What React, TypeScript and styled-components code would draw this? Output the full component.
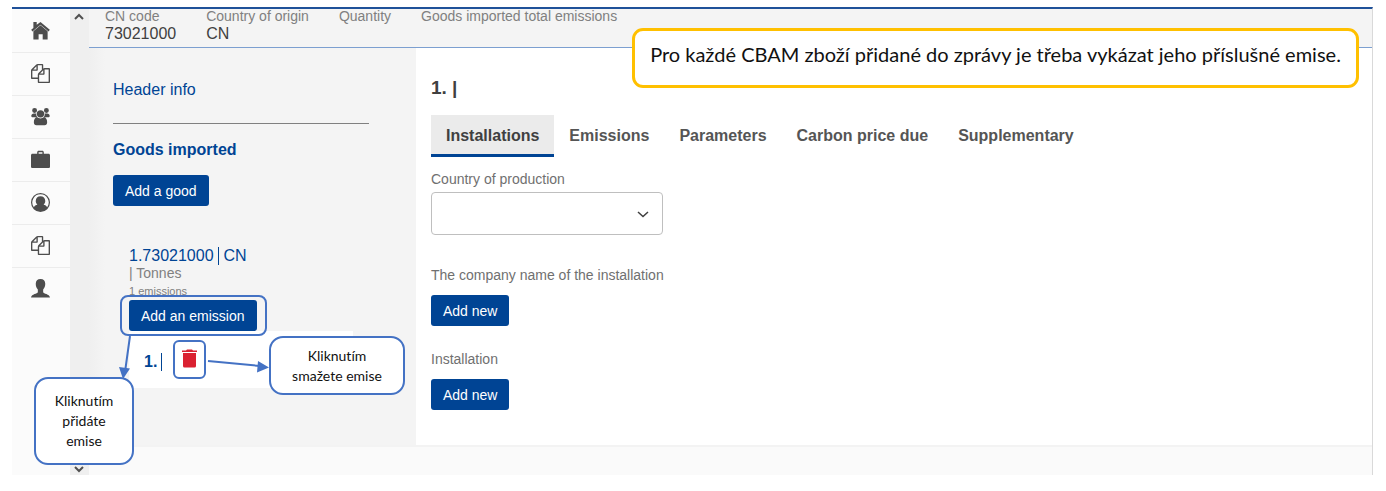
import React from 'react';
import styled, { createGlobalStyle, css } from 'styled-components';

const BLUE = '#004494';
const NOTE_BLUE = '#4472c4';

const GlobalStyle = createGlobalStyle`
  *, *::before, *::after { box-sizing: border-box; }
  body {
    margin: 0;
    background: #fff;
    color: #404040;
    font: 14px/16px "Liberation Sans", Arial, sans-serif;
  }
`;

const Page = styled.div`
  padding: 7px 13px 16px 12px;
`;

const Frame = styled.div`
  position: relative;
  display: grid;
  grid-template-columns: 58px 19px 1fr;
  border-top: 2px solid #1f5199;
  border-right: 1px solid #d9d9d9;
`;

const IconRail = styled.nav`
  display: flex;
  flex-direction: column;
  padding-top: 1px;
  background: #fbfbfb;
`;

const RailLink = styled.a`
  display: flex;
  align-items: center;
  justify-content: center;
  height: 43px;
  padding: 0 2px 2px 0;
  color: #4d4d4d;
  border-bottom: 1px solid #ececec;
  &:last-child { border-bottom: 0; }
`;

const ScrollRail = styled.div`
  display: flex;
  flex-direction: column;
  justify-content: space-between;
  align-items: center;
  padding: 4px 2px 2px 0;
  background: #efefef;
  color: #505050;
`;

const ScrollButton = styled.button`
  display: flex;
  padding: 0;
  border: 0;
  background: none;
  color: inherit;
`;

const Main = styled.main`
  min-width: 0;
  display: flex;
  flex-direction: column;
`;

const Summary = styled.dl`
  display: flex;
  gap: 30px;
  margin: 0;
  height: 39px;
  padding: 0 16px;
  background: #f4f4f4;
  border-bottom: 1px solid #7c9fd0;
`;

const SummaryItem = styled.div`
  dt { color: #808080; line-height: 14px; }
  dd { margin: 0; font-size: 16px; line-height: 22px; }
`;

const Columns = styled.div`
  display: grid;
  grid-template-columns: 327px 1fr;
`;

const SidePane = styled.aside`
  padding: 33px 24px 57px;
  background: linear-gradient(to right, #efefef, #f4f4f4 16px);
`;

const SideLink = styled.a<{ $strong?: boolean }>`
  display: block;
  color: ${BLUE};
  font-size: 16px;
  line-height: 18px;
  font-weight: ${p => (p.$strong ? 700 : 400)};
  text-decoration: none;
`;

const Divider = styled.hr`
  width: 256px;
  margin: 24px 0 17px;
  border: 0;
  border-top: 1px solid #808080;
`;

const Button = styled.button`
  display: block;
  height: 31px;
  padding: 0 12px;
  border: 0;
  border-radius: 3px;
  background: ${BLUE};
  color: #fff;
  font: inherit;
`;

const GoodsButton = styled(Button)`
  margin-top: 16px;
`;

const Good = styled.section`
  margin: 41px 0 0 16px;
  color: #808080;
`;

const Pipe = styled.span`
  display: inline-block;
  width: 1px;
  height: 18px;
  margin: 0 5px 0 4px;
  background: currentColor;
  vertical-align: bottom;
`;

const Small = styled.div`
  font-size: 11px;
  line-height: 20px;
  height: 18px;
  margin-bottom: 1px;
`;

const EmissionRow = styled.div`
  display: flex;
  align-items: center;
  width: 224px;
  height: 57px;
  padding-left: 15px;
  background: #fff;
`;

const EmissionLink = styled(SideLink)`
  padding-top: 4px;
`;

const DeleteButton = styled.button`
  display: flex;
  align-items: center;
  justify-content: center;
  width: 33px;
  height: 39px;
  margin-left: 6px;
  padding: 0 0 2px;
  border: 2px solid ${NOTE_BLUE};
  border-radius: 6px;
  background: #fff;
  color: #da2131;
`;

const Content = styled.section`
  padding: 28px 15px 34px;
`;

const Title = styled.h1`
  margin: 0 0 16px;
  font-size: 19px;
  line-height: 23px;
`;

const Tabs = styled.div`
  display: flex;
`;

const Tab = styled.button<{ $active?: boolean }>`
  height: 42px;
  padding: 3px 15px 0;
  border: 0;
  border-bottom: 3px solid ${p => (p.$active ? BLUE : 'transparent')};
  background: ${p => (p.$active ? '#ebebeb' : 'none')};
  color: ${p => (p.$active ? '#404040' : '#555')};
  font: bold 16px/18px "Liberation Sans", Arial, sans-serif;
`;

const Field = styled.div`
  margin-top: 14px;
  color: #707070;
`;

const Label = styled.label`
  display: block;
  margin-bottom: 5px;
`;

const SelectWrap = styled.div`
  display: grid;
  align-items: center;
  width: 232px;
  margin-bottom: 32px;
  > * { grid-area: 1 / 1; }
  svg { justify-self: end; margin-right: 14px; pointer-events: none; color: #404040; }
`;

const Select = styled.select`
  appearance: none;
  width: 100%;
  height: 43px;
  border: 1px solid #bfbfbf;
  border-radius: 4px;
  background: #fff;
  font: inherit;
`;

const ActionField = styled.div`
  margin-bottom: 25px;
  color: #707070;
  &:last-child { margin-bottom: 0; }
  ${Label} { margin-bottom: 12px; }
`;

const Footer = styled.footer`
  height: 30px;
  border-top: 2px solid #f3f3f3;
  background: #fafafa;
`;

const note = css`
  position: absolute;
  display: flex;
  align-items: center;
  justify-content: center;
  text-align: center;
  background: #fff;
  color: #111;
  font-family: Lato, sans-serif;
  font-variant-ligatures: none;
`;

const Banner = styled.div`
  ${note}
  top: 19px;
  right: 13px;
  width: 727px;
  height: 60px;
  padding-bottom: 8px;
  border: 3px solid #ffc000;
  border-radius: 11px;
  font-size: 20px;
  line-height: 24px;
  white-space: nowrap;
`;

const Callout = styled.div<{ $x: number; $y: number; $w: number; $h: number }>`
  ${note}
  left: ${p => p.$x}px;
  top: ${p => p.$y}px;
  width: ${p => p.$w}px;
  height: ${p => p.$h}px;
  border: 2px solid ${NOTE_BLUE};
  border-radius: 14px;
  font-size: 14px;
  line-height: 20px;
`;

const Outline = styled.div`
  position: absolute;
  left: 108px;
  top: 286px;
  width: 147px;
  height: 41px;
  border: 2px solid ${NOTE_BLUE};
  border-radius: 8px;
  pointer-events: none;
`;

const Arrows = styled.svg`
  position: absolute;
  left: 100px;
  top: 320px;
  pointer-events: none;
`;

const Icon = ({ d, box = 20 }: { d: string; box?: number }) => (
  <svg width="19" height="19" viewBox={`0 0 ${box} ${box}`} fill="currentColor" fillRule="evenodd" aria-hidden="true">
    <path d={d} />
  </svg>
);

const Chevron = ({ up, thin }: { up?: boolean; thin?: boolean }) => (
  <svg width="12" height="8" viewBox="0 0 12 8" fill="none" stroke="currentColor" strokeWidth={thin ? 1.5 : 2} aria-hidden="true">
    <path d={up ? 'M2 6l4-4 4 4' : thin ? 'M1 2l5 4.500 5-4.500' : 'M2 2l4 4 4-4'} />
  </svg>
);

const COPY =
  'M1696 384q40 0 68 28t28 68v1216q0 40-28 68t-68 28h-960q-40 0-68-28t-28-68v-288h-544q-40 0-68-28t-28-68v-672q0-40 20-88t48-76l408-408q28-28 76-48t88-20h416q40 0 68 28t28 68v328q68-40 128-40h416zm-544 213l-299 299h299v-299zm-640-384l-299 299h299v-299zm196 647l316-316v-416h-384v416q0 40-28 68t-68 28h-416v640h512v-256q0-40 20-88t48-76zm956 804v-1152h-384v416q0 40-28 68t-68 28h-416v640h896z';

const rail = [
  { label: 'Home', d: 'M2.500 1h3.500v3L10 1l9.800 8.300-1.300 1.700L10 3.900l-8.500 7.100L.2 9.300 2.500 7.400zM10 4.600l7.500 6.300V19.500h-5.200v-5.500H8v5.500H2.500v-8.600z' },
  { label: 'Reports', d: COPY, box: 1792 },
  { label: 'Groups', d: 'M3.800 1a2.600 2.600 0 1 1 0 5.200 2.600 2.600 0 0 1 0-5.200zM16.200 1a2.600 2.600 0 1 1 0 5.200 2.600 2.600 0 0 1 0-5.200zM10 3.300a3.900 3.900 0 1 1 0 7.800 3.900 3.900 0 0 1 0-7.800zM.3 9.500C.3 7.800 1.500 6.800 3 6.800h2.500c0 1.800.4 3 1.200 4H2C1 10.800.3 10.500.3 9.500zM19.700 9.500c0-1.700-1.200-2.700-2.700-2.700h-2.500c0 1.800-.4 3-1.200 4H18c1 0 1.700-.3 1.700-1.300zM3 16c0-3 1.200-5.200 3.700-5.200.8.700 2 1.200 3.300 1.200s2.500-.5 3.300-1.200c2.500 0 3.700 2.200 3.700 5.200 0 2.200-1 3.200-2.700 3.200H5.700C4 19.200 3 18.200 3 16z' },
  { label: 'Goods', d: 'M6.500 4V2.500C6.500 1.500 7.200.8 8.200.8h3.600c1 0 1.700.7 1.700 1.700V4h5c.8 0 1.500.7 1.500 1.500V17.500c0 .8-.7 1.500-1.500 1.500h-17C.7 19 0 18.300 0 17.500V5.500C0 4.700.7 4 1.500 4zM8 4h4V2.300H8z' },
  { label: 'Account', d: 'M10 0a10 10 0 1 1 0 20 10 10 0 0 1 0-20zM10 1.400A8.600 8.600 0 0 0 3 15c.8-1.800 2-2.600 3.700-2.700C5.600 11.300 5 10 5 8.500c0-3 2-5 5-5s5 2 5 5c0 1.500-.6 2.800-1.700 3.800 1.700.1 2.900.9 3.700 2.700A8.600 8.600 0 0 0 10 1.400z' },
  { label: 'Documents', d: COPY, box: 1792 },
  { label: 'Profile', d: 'M10 0c3.200 0 5 2 5 5 0 2.500-.8 4.600-2.200 6v3c.5 1.700 6.500 1.700 7.200 5.500H0c.7-3.800 6.700-3.800 7.200-5.500v-3C5.800 9.600 5 7.500 5 5c0-3 1.800-5 5-5z' },
];

const summary = [
  ['CN code', '73021000'],
  ['Country of origin', 'CN'],
  ['Quantity', ''],
  ['Goods imported total emissions', ''],
];

const tabs = ['Installations', 'Emissions', 'Parameters', 'Carbon price due', 'Supplementary'];

export default function App() {
  return (
    <Page>
      <GlobalStyle />
      <Frame>
        <IconRail aria-label="Main">
          {rail.map(item => (
            <RailLink key={item.label} href="#" aria-label={item.label}>
              <Icon d={item.d} box={item.box} />
            </RailLink>
          ))}
        </IconRail>
        <ScrollRail>
          <ScrollButton aria-label="Scroll up"><Chevron up /></ScrollButton>
          <ScrollButton aria-label="Scroll down"><Chevron /></ScrollButton>
        </ScrollRail>
        <Main>
          <Summary>
            {summary.map(([term, value]) => (
              <SummaryItem key={term}>
                <dt>{term}</dt>
                <dd>{value}</dd>
              </SummaryItem>
            ))}
          </Summary>
          <Columns>
            <SidePane>
              <SideLink href="#">Header info</SideLink>
              <Divider />
              <SideLink href="#" $strong>Goods imported</SideLink>
              <GoodsButton>Add a good</GoodsButton>
              <Good>
                <SideLink href="#">1.73021000<Pipe />CN</SideLink>
                <div>| Tonnes</div>
                <Small>1 emissions</Small>
                <Button>Add an emission</Button>
                <EmissionRow>
                  <EmissionLink href="#" $strong>1.<Pipe /></EmissionLink>
                  <DeleteButton aria-label="Delete emission">
                    <svg width="15" height="19" viewBox="0 0 15 19" fill="currentColor" aria-hidden="true">
                      <path d="M0 1.500h4L5 .5h5l1 1h4V3H0zM1 4h13V17q0 1.500-1.500 1.500h-10Q1 18.500 1 17z" />
                    </svg>
                  </DeleteButton>
                </EmissionRow>
              </Good>
            </SidePane>
            <Content>
              <Title>1. |</Title>
              <Tabs role="tablist">
                {tabs.map((tab, i) => (
                  <Tab key={tab} role="tab" aria-selected={i === 0} $active={i === 0}>{tab}</Tab>
                ))}
              </Tabs>
              <Field>
                <Label htmlFor="country">Country of production</Label>
                <SelectWrap>
                  <Select id="country" />
                  <Chevron thin />
                </SelectWrap>
              </Field>
              <ActionField>
                <Label htmlFor="company">The company name of the installation</Label>
                <Button id="company">Add new</Button>
              </ActionField>
              <ActionField>
                <Label htmlFor="installation">Installation</Label>
                <Button id="installation">Add new</Button>
              </ActionField>
            </Content>
          </Columns>
          <Footer />
        </Main>
        <Outline />
        <Banner>Pro každé CBAM zboží přidané do zprávy je třeba vykázat jeho příslušné emise.</Banner>
        <Callout $x={22} $y={368} $w={100} $h={88}>Kliknutím<br />přidáte<br />emise</Callout>
        <Callout $x={257} $y={327} $w={136} $h={59}>Kliknutím<br />smažete emise</Callout>
        <Arrows width="160" height="54" aria-hidden="true">
          <g stroke={NOTE_BLUE} strokeWidth="2" fill={NOTE_BLUE}>
            <path d="M18 7l-5 36M96 32l52 5" />
            <path d="M7 38l11 1.500-7 10.500zM146 32l11 6.500-12 5z" strokeWidth="0" />
          </g>
        </Arrows>
      </Frame>
    </Page>
  );
}
